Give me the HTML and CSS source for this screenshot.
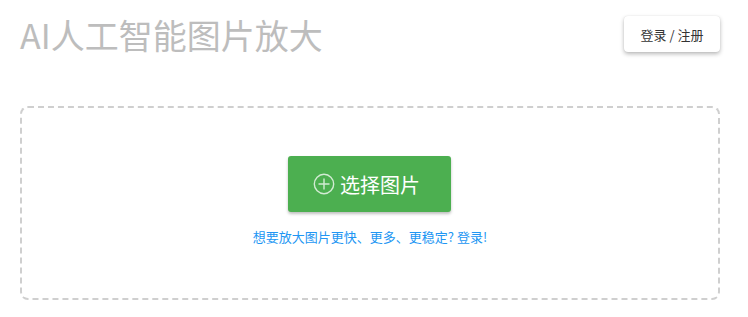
FILE: index.html
```html
<!DOCTYPE html>
<html lang="zh-CN">
<head>
<meta charset="utf-8">
<link rel="stylesheet" href="styles.css">
</head>
<body>
<div class="page">
  <header class="header">
    <h1 class="title">AI人工智能图片放大</h1>
    <button class="login">登录 / 注册</button>
  </header>
  <section class="drop">
    <button class="pick">
      <svg class="pick-icon" width="22" height="22" viewBox="0 0 22 22"><circle cx="11" cy="11" r="9.7" fill="none" stroke="rgba(255,255,255,0.75)" stroke-width="1.4"/><path d="M11 5.5v11M5.5 11h11" stroke="rgba(255,255,255,0.75)" stroke-width="1.4"/></svg>
      <span>选择图片</span>
    </button>
    <a class="hint" href="#">想要放大图片更快、更多、更稳定? 登录!</a>
  </section>
</div>
</body>
</html>
```

FILE: styles.css
```css
* { box-sizing: border-box; }
html, body { margin: 0; padding: 0; background: #fff; }
body { font-family: "Microsoft YaHei", "Noto Sans CJK SC", "Liberation Sans", sans-serif; }
.page { width: 700px; margin-left: 20px; }
.header { display: flex; justify-content: space-between; align-items: flex-start; height: 106px; }
.title { margin: 12px 0 0 0; font-size: 34px; font-weight: 400; color: #bdbdbd; line-height: 46px; letter-spacing: 0; }
.login { margin-top: 16px; width: 96px; height: 36px; border: none; border-radius: 4px; background: #fff; color: #333; font-family: inherit; font-size: 13px; box-shadow: 0 2px 4px rgba(0,0,0,0.28), 0 0 1px rgba(0,0,0,0.12); padding: 0; }
.drop { height: 194px; border: 2px dashed #cfcfcf; border-radius: 8px; display: flex; flex-direction: column; align-items: center; padding-top: 48px; }
.pick { width: 163px; height: 56px; margin-right: 2px; background: #4caf50; border: none; border-radius: 3px; color: #fff; font-family: inherit; font-size: 20px; display: flex; align-items: center; justify-content: center; gap: 5px; box-shadow: 0 2px 3px rgba(0,0,0,0.25); padding: 0 5px 0 0; }
.pick-icon { display: block; }
.hint { margin-top: 17px; font-size: 13px; color: #2196f3; text-decoration: none; line-height: 16px; }
```
